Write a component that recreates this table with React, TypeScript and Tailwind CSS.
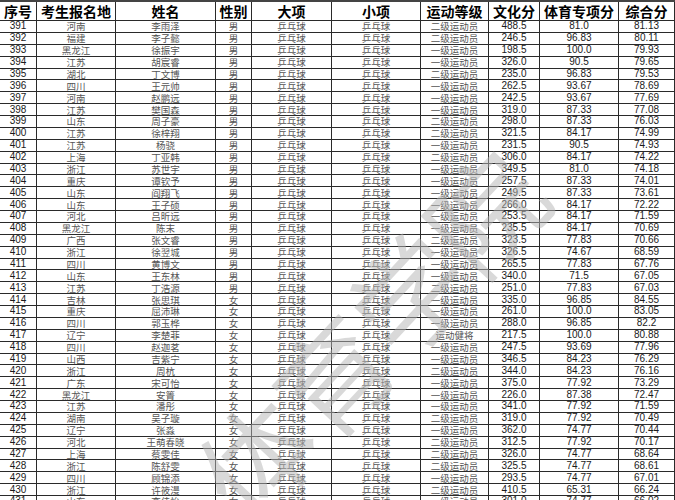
import React from 'react';

// one row per candidate: 序号, 报名地, 姓名, 性别, 等级, 文化分, 专项分, 综合分
const rows: [string, string, string, string, string, string, string, string][] = [
  ['391', '河南', '李雨泽', '男', '二级运动员', '488.5', '81.0', '81.13'],
  ['392', '福建', '李子懿', '男', '二级运动员', '246.5', '96.83', '80.11'],
  ['393', '黑龙江', '徐振宇', '男', '一级运动员', '198.5', '100.0', '79.93'],
  ['394', '江苏', '胡宸睿', '男', '一级运动员', '326.0', '90.5', '79.65'],
  ['395', '湖北', '丁文博', '男', '二级运动员', '235.0', '96.83', '79.53'],
  ['396', '四川', '王元帅', '男', '一级运动员', '262.5', '93.67', '78.69'],
  ['397', '河南', '赵鹏远', '男', '一级运动员', '242.5', '93.67', '77.69'],
  ['398', '江苏', '樊国森', '男', '一级运动员', '319.0', '87.33', '77.08'],
  ['399', '山东', '周子豪', '男', '二级运动员', '298.0', '87.33', '76.03'],
  ['400', '江苏', '徐梓翔', '男', '二级运动员', '321.5', '84.17', '74.99'],
  ['401', '江苏', '杨骁', '男', '一级运动员', '231.5', '90.5', '74.93'],
  ['402', '上海', '丁亚韩', '男', '二级运动员', '306.0', '84.17', '74.22'],
  ['403', '浙江', '苏世宇', '男', '一级运动员', '349.5', '81.0', '74.18'],
  ['404', '重庆', '谭钦予', '男', '一级运动员', '257.5', '87.33', '74.01'],
  ['405', '山东', '阎翔飞', '男', '一级运动员', '249.5', '87.33', '73.61'],
  ['406', '山东', '王子硕', '男', '一级运动员', '266.0', '84.17', '72.22'],
  ['407', '河北', '吕昕远', '男', '一级运动员', '253.5', '84.17', '71.59'],
  ['408', '黑龙江', '陈末', '男', '一级运动员', '235.5', '84.17', '70.69'],
  ['409', '广西', '张文睿', '男', '二级运动员', '323.5', '77.83', '70.66'],
  ['410', '浙江', '徐翌城', '男', '一级运动员', '326.5', '74.67', '68.59'],
  ['411', '四川', '黄博文', '男', '一级运动员', '265.5', '77.83', '67.76'],
  ['412', '山东', '王东林', '男', '一级运动员', '340.0', '71.5', '67.05'],
  ['413', '江苏', '丁浩源', '男', '二级运动员', '251.0', '77.83', '67.03'],
  ['414', '吉林', '张思琪', '女', '一级运动员', '335.0', '96.85', '84.55'],
  ['415', '重庆', '屈沛琳', '女', '一级运动员', '261.0', '100.0', '83.05'],
  ['416', '四川', '郭玉桦', '女', '一级运动员', '288.0', '96.85', '82.2'],
  ['417', '辽宁', '李楚菲', '女', '运动健将', '217.5', '100.0', '80.88'],
  ['418', '四川', '赵迦茗', '女', '一级运动员', '247.5', '93.69', '77.96'],
  ['419', '山西', '吉紫宁', '女', '一级运动员', '346.5', '84.23', '76.29'],
  ['420', '浙江', '周杭', '女', '二级运动员', '344.0', '84.23', '76.16'],
  ['421', '广东', '宋可怡', '女', '一级运动员', '375.0', '77.92', '73.29'],
  ['422', '黑龙江', '安箐', '女', '一级运动员', '226.0', '87.38', '72.47'],
  ['423', '江苏', '潘彤', '女', '一级运动员', '341.0', '77.92', '71.59'],
  ['424', '湖南', '吴子璇', '女', '二级运动员', '319.0', '77.92', '70.49'],
  ['425', '辽宁', '张淼', '女', '一级运动员', '362.0', '74.77', '70.44'],
  ['426', '河北', '王萌春晓', '女', '二级运动员', '312.5', '77.92', '70.17'],
  ['427', '上海', '蔡雯佳', '女', '二级运动员', '326.0', '74.77', '68.64'],
  ['428', '浙江', '陈舒雯', '女', '二级运动员', '325.5', '74.77', '68.61'],
  ['429', '四川', '顾锦添', '女', '一级运动员', '293.5', '74.77', '67.01'],
  ['430', '浙江', '许筱漫', '女', '二级运动员', '410.5', '65.31', '66.24'],
  ['431', '山东', '李佳怡', '女', '一级运动员', '301.0', '74.77', '66.02'],
];

const headers = ['序号', '考生报名地', '姓名', '性别', '大项', '小项', '运动等级', '文化分', '体育专项分', '综合分'];

const cols = 'grid grid-cols-[37px_79px_100px_36px_80px_89px_68px_51px_79px_56px]';
const cell = 'flex items-center justify-center border-r border-b border-[#2a2a2a] overflow-hidden whitespace-nowrap';
const cn = `${cell} text-[9.5px] leading-[10px] text-[#555] font-['Noto_Sans_CJK_SC',sans-serif]`;
const num = `${cell} text-[10px] leading-[10px] text-[#1a1a1a] font-['Liberation_Sans_Narrow','Liberation_Sans',Arial,sans-serif]`;

export default function App() {
  return (
    <div className="relative w-[675px] h-[500px] overflow-hidden bg-white">
      <div className="border-t-2 border-[#444]">
        <div className={`${cols} h-[19px]`}>
          {headers.map((h) => (
            <div
              key={h}
              className={`${cell} text-[14px] font-bold text-black font-['Noto_Sans_CJK_SC',sans-serif] leading-[16px]`}
            >
              {h}
            </div>
          ))}
        </div>
        {rows.map((r) => (
          <div key={r[0]} className={`${cols} h-[11.875px]`}>
            <div className={num}>{r[0]}</div>
            <div className={cn}>{r[1]}</div>
            <div className={cn}>{r[2]}</div>
            <div className={cn}>{r[3]}</div>
            <div className={cn}>乒乓球</div>
            <div className={cn}>乒乓球</div>
            <div className={cn}>{r[4]}</div>
            <div className={num}>{r[5]}</div>
            <div className={num}>{r[6]}</div>
            <div className={num}>{r[7]}</div>
          </div>
        ))}
      </div>

      {/* watermark */}
      <div className="pointer-events-none absolute left-[215px] top-[440px] -rotate-[47deg] origin-left whitespace-nowrap text-[112px] font-normal leading-[112px] text-[#b5b5b5] opacity-50 font-['Noto_Sans_CJK_SC',sans-serif]">
        体育学院
      </div>
    </div>
  );
}
